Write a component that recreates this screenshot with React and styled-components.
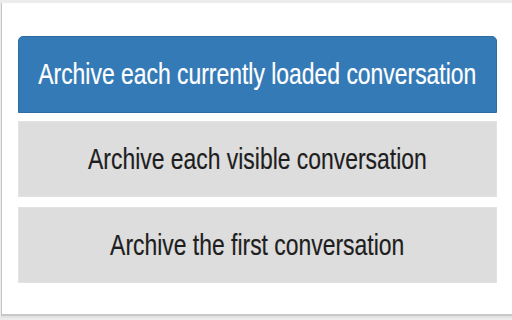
import React from "react";
import styled, { createGlobalStyle } from "styled-components";

const GlobalStyle = createGlobalStyle`
  html, body {
    margin: 0;
    padding: 0;
    background: #ededed;
  }
  body {
    width: 512px;
    height: 320px;
    overflow: hidden;
    font-family: "Liberation Sans", Arial, sans-serif;
  }
`;

const Chrome = styled.div`
  width: 512px;
  height: 320px;
  padding-top: 3px;
  box-sizing: border-box;
  background: #ececec;
`;

const Popup = styled.div`
  height: 313px;
  margin-left: 1px;
  background: #ffffff;
  border-left: 1px solid #c4c4c4;
  border-bottom: 2px solid #c8c8c8;
  box-shadow: 0 2px 0 #e2e2e2;
  box-sizing: border-box;
  padding: 33px 15px 0 16px;
  display: flex;
  flex-direction: column;
  gap: 8px;
`;

const ActionButton = styled.button`
  display: flex;
  align-items: center;
  justify-content: center;
  height: ${(p) => (p.$primary ? "77px" : "76px")};
  margin: 0;
  padding: 0;
  box-sizing: border-box;
  border: 1px solid ${(p) => (p.$primary ? "#2e6da4" : "#e2e2e2")};
  border-radius: ${(p) => (p.$primary ? "5px 5px 0 0" : "0")};
  background: ${(p) => (p.$primary ? "#337ab7" : "#dddddd")};
  color: ${(p) => (p.$primary ? "#ffffff" : "#1e1e1e")};
  font-family: "Liberation Sans", Arial, sans-serif;
  font-size: 29px;
  cursor: pointer;
  overflow: hidden;
  white-space: nowrap;

  & + & + & {
    margin-top: 2px;
  }
`;

const Label = styled.span`
  display: inline-block;
  transform: scaleX(0.79);
  line-height: 1;
  -webkit-text-stroke: 0.2px currentColor;
`;

const actions = [
  { label: "Archive each currently loaded conversation", primary: true },
  { label: "Archive each visible conversation" },
  { label: "Archive the first conversation" },
];

const App = () => {
  return (
    <>
      <GlobalStyle />
      <Chrome>
        <Popup>
          {actions.map((a) => (
            <ActionButton key={a.label} $primary={a.primary}>
              <Label>{a.label}</Label>
            </ActionButton>
          ))}
        </Popup>
      </Chrome>
    </>
  );
};

export default App;
